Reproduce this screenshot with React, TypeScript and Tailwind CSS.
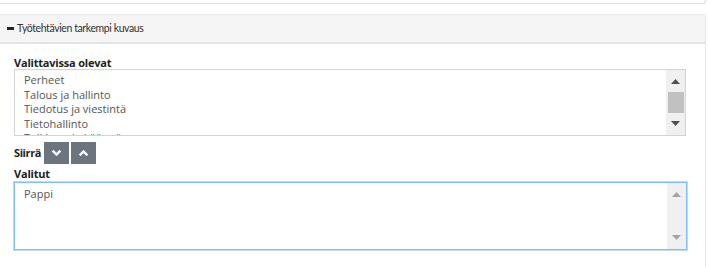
import React from 'react';

const available = ['Perheet', 'Talous ja hallinto', 'Tiedotus ja viestintä', 'Tietohallinto', 'Tulkkaus ja käännös'];

function Scrollbar({ dim, thumb }: { dim?: boolean; thumb?: boolean }) {
  const arrow = dim ? 'fill-[#a3a3a3]' : 'fill-[#505050]';
  return (
    <div className="w-[19px] shrink-0 bg-[#f0f0f0] flex flex-col items-center justify-between py-[9px]">
      <svg width="9" height="6" viewBox="0 0 9 6" className={arrow}>
        <polygon points="4.5,0 9,5 0,5" />
      </svg>
      {thumb && <div className="w-[16px] h-[21px] bg-[#c1c1c1]" />}
      <svg width="9" height="6" viewBox="0 0 9 6" className={arrow}>
        <polygon points="0,1 9,1 4.5,6" />
      </svg>
    </div>
  );
}

function Chevron({ up }: { up?: boolean }) {
  return (
    <svg width="9" height="6" viewBox="0 0 9 6" fill="none" stroke="white" strokeWidth="2.4" strokeLinecap="square">
      {up ? <polyline points="1.5,4.5 4.5,1.5 7.5,4.5" /> : <polyline points="1.5,1.5 4.5,4.5 7.5,1.5" />}
    </svg>
  );
}

export default function App() {
  return (
    <div className="w-[708px] h-[267px] bg-white overflow-hidden text-[11px] text-[#333] font-['Open_Sans',sans-serif]">
      <div className="w-[706px] h-[4px] border-r border-b border-[#dedede] rounded-br-[3px]" />

      <div className="mt-[10px] w-[706px] h-[260px] border-t border-r border-[#e6e6e6] rounded-tr-[3px]">
        <div className="h-[29px] bg-[#f5f5f5] border-b-2 border-[#e3e3e3] flex items-center pl-[7px] gap-[3px] text-[#333]">
          <span className="w-[7px] h-[3px] bg-[#222]" />
          <span className="font-['Lato',sans-serif] text-[10.5px] tracking-[-0.4px]">Työtehtävien tarkempi kuvaus</span>
        </div>

        <div className="pl-[14px] pr-[19px] pt-[12px]">
          <div className="font-bold leading-[14px] h-[13px] text-[#222] tracking-[-0.2px]">Valittavissa olevat</div>
          <div className="h-[67px] border border-[#cfd4da] flex overflow-hidden">
            <div className="flex-1 pl-[9px] pt-[3px] leading-[14.5px] text-[#555] overflow-hidden">
              {available.map((item) => (
                <div key={item}>{item}</div>
              ))}
            </div>
            <Scrollbar thumb />
          </div>

          <div className="flex items-center gap-[2px] mt-[6px] h-[22px]">
            <span className="font-bold text-[#222] tracking-[-0.4px] mr-[1px]">Siirrä</span>
            <button className="w-[25px] h-[22px] bg-[#6c757d] flex items-center justify-center">
              <Chevron />
            </button>
            <button className="w-[25px] h-[22px] bg-[#6c757d] flex items-center justify-center">
              <Chevron up />
            </button>
          </div>

          <div className="font-bold leading-[14px] mt-[3px] h-[15px] text-[#222] tracking-[-0.2px]">Valitut</div>
          <div className="h-[68px] w-[673px] border border-[#80bdff] shadow-[0_0_0_1px_#bcdcff] flex overflow-hidden">
            <div className="flex-1 pl-[9px] pt-[4px] leading-[14.5px] text-[#555]">Pappi</div>
            <Scrollbar dim />
          </div>
        </div>
      </div>
    </div>
  );
}
